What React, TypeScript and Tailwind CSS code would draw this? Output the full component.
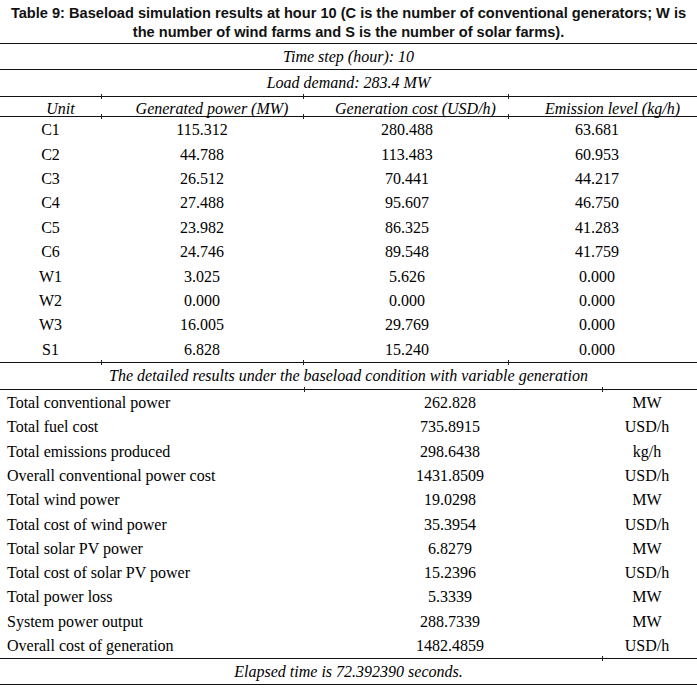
import React from 'react';

const units = [
  ['C1', '115.312', '280.488', '63.681'],
  ['C2', '44.788', '113.483', '60.953'],
  ['C3', '26.512', '70.441', '44.217'],
  ['C4', '27.488', '95.607', '46.750'],
  ['C5', '23.982', '86.325', '41.283'],
  ['C6', '24.746', '89.548', '41.759'],
  ['W1', '3.025', '5.626', '0.000'],
  ['W2', '0.000', '0.000', '0.000'],
  ['W3', '16.005', '29.769', '0.000'],
  ['S1', '6.828', '15.240', '0.000'],
];

const totals = [
  ['Total conventional power', '262.828', 'MW'],
  ['Total fuel cost', '735.8915', 'USD/h'],
  ['Total emissions produced', '298.6438', 'kg/h'],
  ['Overall conventional power cost', '1431.8509', 'USD/h'],
  ['Total wind power', '19.0298', 'MW'],
  ['Total cost of wind power', '35.3954', 'USD/h'],
  ['Total solar PV power', '6.8279', 'MW'],
  ['Total cost of solar PV power', '15.2396', 'USD/h'],
  ['Total power loss', '5.3339', 'MW'],
  ['System power output', '288.7339', 'MW'],
  ['Overall cost of generation', '1482.4859', 'USD/h'],
];

// little cell-border marks poking out of the rules, like in the Word table
const Tick = () => <span className="w-px h-[5px] shrink-0 bg-[#222]" />;

const Rule = ({ children }: { children?: React.ReactNode }) => (
  <div className="flex items-center h-px bg-[#111]">{children}</div>
);

const UnitTicks = () => (
  <Rule>
    <div className="w-[101px] shrink-0" />
    <Tick />
    <div className="w-[201px] shrink-0" />
    <Tick />
    <div className="w-[204px] shrink-0" />
    <Tick />
  </Rule>
);

const App = () => {
  return (
    <div className="w-[697px] bg-white text-black font-['Liberation_Serif',serif] text-[16px]">
      <div className="pt-[4px] pb-[2px] text-center font-['Liberation_Sans',Arial,sans-serif] font-bold text-[14.6px] leading-[18.5px] text-[#111]">
        Table 9: Baseload simulation results at hour 10 (C is the number of conventional generators; W is
        <br />
        the number of wind farms and S is the number of solar farms).
      </div>

      <Rule />
      <div className="h-[25px] flex items-center justify-center italic">Time step (hour): 10</div>
      <Rule />
      <div className="h-[26px] flex items-center justify-center italic">Load demand: 283.4 MW</div>
      <UnitTicks />
      <div className="h-[19px] grid grid-cols-[101px_202px_205px_1fr] items-center text-center italic">
        <div className="pl-5">Unit</div>
        <div className="pl-5">Generated power (MW)</div>
        <div className="pl-5">Generation cost (USD/h)</div>
        <div className="pl-5">Emission level (kg/h)</div>
      </div>
      <UnitTicks />
      <div className="pt-px">
        {units.map(([u, p, c, e]) => (
          <div key={u} className="h-[24.4px] grid grid-cols-[101px_202px_205px_1fr] items-center text-center">
            <div>{u}</div>
            <div>{p}</div>
            <div className="pl-[3px]">{c}</div>
            <div className="pr-[11px]">{e}</div>
          </div>
        ))}
      </div>
      <UnitTicks />
      <div className="h-[26px] flex items-center justify-center italic">
        The detailed results under the baseload condition with variable generation
      </div>
      <Rule>
        <div className="w-[304px] shrink-0" />
        <Tick />
        <div className="w-[297px] shrink-0" />
        <Tick />
      </Rule>
      <div className="pt-px">
        {totals.map(([label, value, unit]) => (
          <div key={label} className="h-[24.3px] grid grid-cols-[304px_298px_1fr] items-center">
            <div className="pl-[7px]">{label}</div>
            <div className="text-center pr-[6px]">{value}</div>
            <div className="text-center pr-[5px]">{unit}</div>
          </div>
        ))}
      </div>
      <Rule>
        <div className="w-[602px] shrink-0" />
        <Tick />
      </Rule>
      <div className="h-[25px] flex items-center justify-center italic">Elapsed time is 72.392390 seconds.</div>
      <Rule />
    </div>
  );
};

export default App;
